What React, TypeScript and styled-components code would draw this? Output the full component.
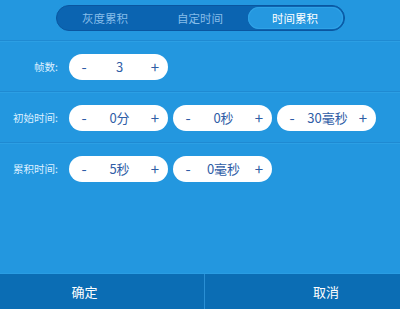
import * as React from 'react';
import styled, { createGlobalStyle } from 'styled-components';

const GlobalStyle = createGlobalStyle`
  html, body {
    margin: 0;
    padding: 0;
    height: 100%;
  }
  body {
    background: #2397df;
    font-family: "Noto Sans CJK SC", "Noto Sans", sans-serif;
  }
  #root {
    height: 100%;
  }
`;

const Page = styled.div`
  display: flex;
  flex-direction: column;
  height: 309px;
  width: 400px;
  background: #2397df;
  overflow: hidden;
`;

const Header = styled.div`
  height: 41px;
  display: flex;
  justify-content: center;
  padding-top: 5px;
  box-sizing: border-box;
  border-bottom: 1px solid #1f8ad2;
  box-shadow: 0 1px 0 #2c9fe4;
`;

const TabBar = styled.div`
  display: flex;
  width: 289px;
  height: 26px;
  box-sizing: border-box;
  padding: 1px;
  border-radius: 13px;
  background: #0b64b1;
  border: 1px solid #0a56a0;
`;

const Tab = styled.div<{ $active?: boolean }>`
  flex: 1;
  display: flex;
  align-items: center;
  justify-content: center;
  border-radius: 12px;
  font-size: 11.5px;
  color: ${(p) => (p.$active ? '#ffffff' : '#86bde9')};
  background: ${(p) => (p.$active ? '#2598e0' : 'transparent')};
  box-shadow: ${(p) => (p.$active ? 'inset 0 0 0 1px #2fa2e6' : 'none')};
`;

const Row = styled.div`
  height: 49px;
  display: flex;
  align-items: center;
  gap: 11px;
  padding-top: 1px;
  border-bottom: 1px solid #1f8ad2;
  box-shadow: 0 1px 0 #2c9fe4;
`;

const LastRow = styled(Row)`
  border-bottom: none;
  box-shadow: none;
`;

const Label = styled.div`
  width: 58px;
  text-align: right;
  font-size: 10.5px;
  color: #dcefff;
`;

const Pills = styled.div`
  display: flex;
  gap: 5px;
`;

const Pill = styled.div`
  width: 99px;
  height: 26px;
  box-sizing: border-box;
  border-radius: 13px;
  background: #ffffff;
  display: flex;
  align-items: center;
  padding: 0 7px 0 9px;
  color: #2f5da6;
`;

const Btn = styled.span`
  width: 12px;
  font-size: 15px;
  text-align: center;
  line-height: 1;
`;

const Value = styled.span`
  flex: 1;
  text-align: center;
  font-size: 13px;
`;

const Footer = styled.div`
  margin-top: auto;
  height: 35px;
  display: grid;
  grid-template-columns: 205px 1fr;
  background: #0b6db4;
  border-top: 1px solid #2a9de3;
`;

const FooterButton = styled.div<{ $padLeft: number; $padRight: number; $divider?: boolean }>`
  display: flex;
  align-items: center;
  justify-content: center;
  padding-left: ${(p) => p.$padLeft}px;
  padding-right: ${(p) => p.$padRight}px;
  font-size: 13px;
  color: #ffffff;
  border-right: ${(p) => (p.$divider ? '1px solid #2a8fd4' : 'none')};
`;

const Stepper = ({ value }: { value: string }) => (
  <Pill>
    <Btn>-</Btn>
    <Value>{value}</Value>
    <Btn>+</Btn>
  </Pill>
);

export default function App() {
  return (
    <Page>
      <GlobalStyle />
      <Header>
        <TabBar>
          <Tab>灰度累积</Tab>
          <Tab>自定时间</Tab>
          <Tab $active>时间累积</Tab>
        </TabBar>
      </Header>
      <Row>
        <Label>帧数:</Label>
        <Pills>
          <Stepper value="3" />
        </Pills>
      </Row>
      <Row>
        <Label>初始时间:</Label>
        <Pills>
          <Stepper value="0分" />
          <Stepper value="0秒" />
          <Stepper value="30毫秒" />
        </Pills>
      </Row>
      <LastRow>
        <Label>累积时间:</Label>
        <Pills>
          <Stepper value="5秒" />
          <Stepper value="0毫秒" />
        </Pills>
      </LastRow>
      <Footer>
        <FooterButton $padLeft={0} $padRight={35} $divider>确定</FooterButton>
        <FooterButton $padLeft={47} $padRight={0}>取消</FooterButton>
      </Footer>
    </Page>
  );
}
